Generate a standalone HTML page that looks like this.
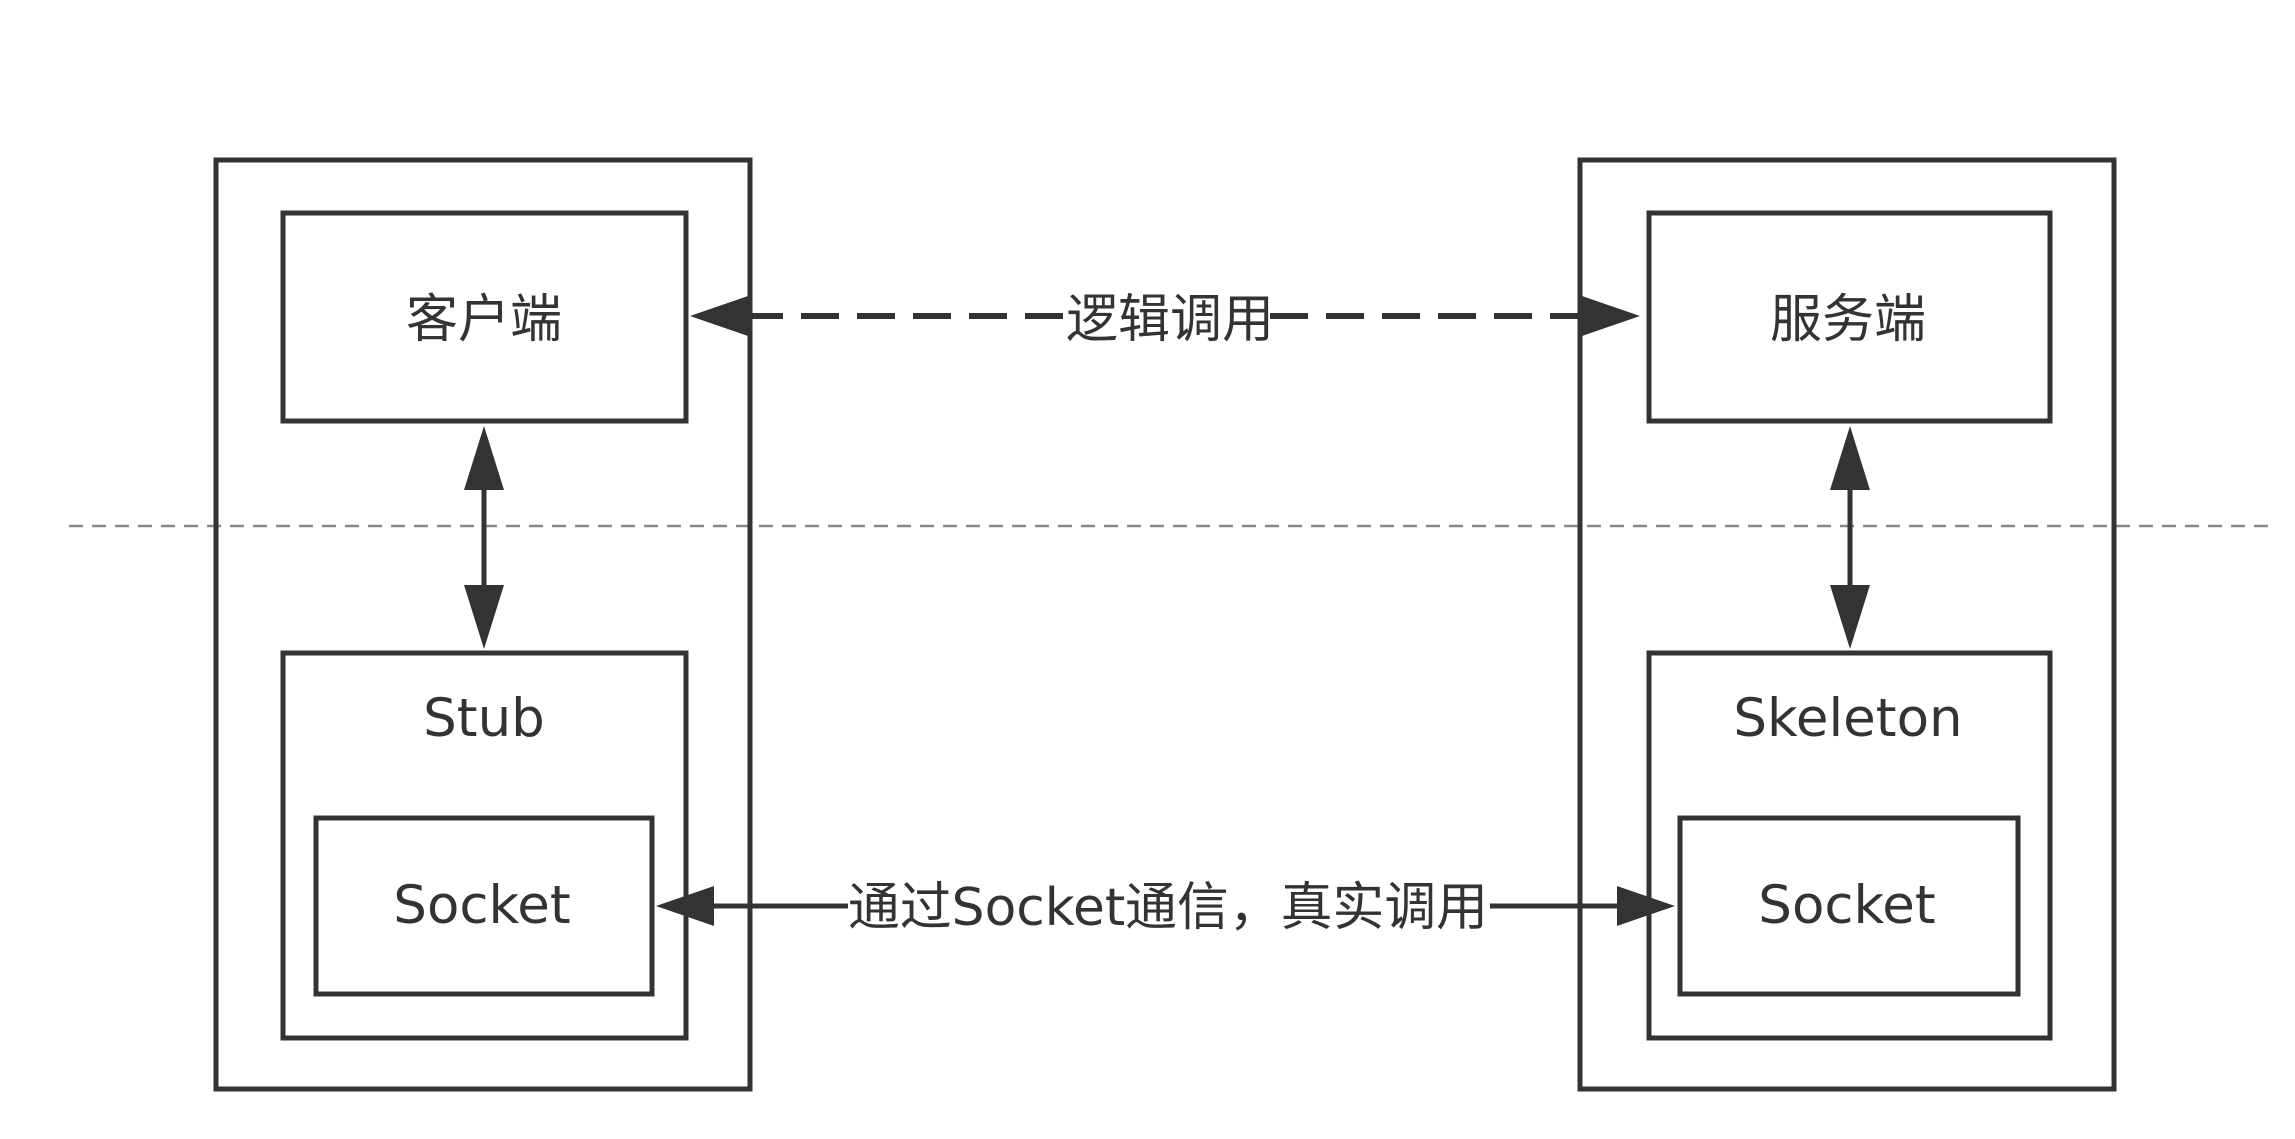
<!DOCTYPE html>
<html><head><meta charset="utf-8"><style>
html,body{margin:0;padding:0;background:#fff;}
svg{display:block;}
text{font-family:"DejaVu Sans","Noto Sans CJK SC",sans-serif;fill:#333;}
</style></head><body>
<svg width="2295" height="1139" viewBox="0 0 2295 1139" xmlns="http://www.w3.org/2000/svg">
<rect width="2295" height="1139" fill="#fff"/>
<line x1="69" y1="526" x2="2268" y2="526" stroke="#888" stroke-width="2.5" stroke-dasharray="14,9"/>
<g fill="none" stroke="#333" stroke-width="5">
<rect x="216" y="160" width="534" height="929"/>
<rect x="1580" y="160" width="534" height="929"/>
<rect x="283" y="213" width="403" height="208"/>
<rect x="1649" y="213" width="401" height="208"/>
<rect x="283" y="653" width="403" height="385"/>
<rect x="1649" y="653" width="401" height="385"/>
<rect x="316" y="818" width="336" height="176"/>
<rect x="1680" y="818" width="338" height="176"/>
</g>
<g stroke="#333" stroke-width="5">
<line x1="484" y1="470" x2="484" y2="605"/>
<line x1="1850" y1="470" x2="1850" y2="605"/>
<line x1="710" y1="906" x2="848" y2="906"/>
<line x1="1490" y1="906" x2="1625" y2="906"/>
</g>
<line x1="745" y1="316" x2="1068" y2="316" stroke="#333" stroke-width="6" stroke-dasharray="38,18"/>
<line x1="1270" y1="316" x2="1585" y2="316" stroke="#333" stroke-width="6" stroke-dasharray="38,18"/>
<g fill="#333">
<polygon points="690,316 748,296 748,336"/>
<polygon points="1640,316 1582,296 1582,336"/>
<polygon points="484,426 464,490 504,490"/>
<polygon points="484,649 464,585 504,585"/>
<polygon points="1850,426 1830,490 1870,490"/>
<polygon points="1850,649 1830,585 1870,585"/>
<polygon points="656,906 714,886 714,926"/>
<polygon points="1675,906 1617,886 1617,926"/>
</g>
<g font-size="52" text-anchor="middle">
<text x="484" y="337">客户端</text>
<text x="1848" y="337">服务端</text>
<text x="1170" y="337">逻辑调用</text>
<text x="1168" y="925" textLength="640" lengthAdjust="spacingAndGlyphs">通过Socket通信，真实调用</text>
</g>
<g font-size="53" text-anchor="middle">
<text x="484" y="736">Stub</text>
<text x="1848" y="736">Skeleton</text>
<text x="482" y="923">Socket</text>
<text x="1847" y="923">Socket</text>
</g>
</svg>
</body></html>
